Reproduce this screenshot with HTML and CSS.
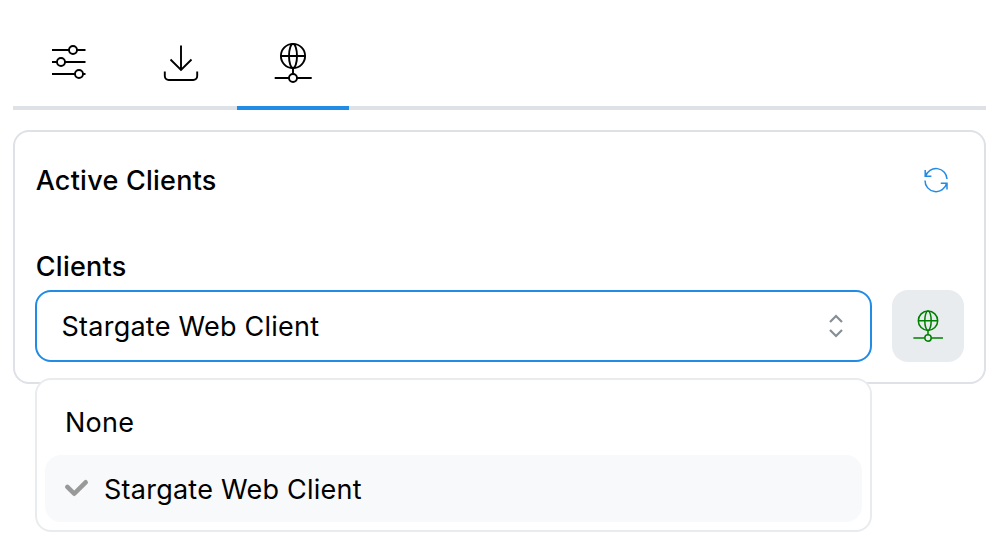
FILE: index.html
```
<!DOCTYPE html>
<html lang="en">
<head>
<meta charset="utf-8">
<title>Active Clients</title>
<link rel="stylesheet" href="styles.css">
</head>
<body>
<nav class="tabs">
  <button class="tab" aria-label="Settings">
    <svg class="tab-icon" viewBox="0 0 40 40"><path d="M3 8H20M28 8h8.500M3 20H8M16 20h20.500M3 32H26M34 32h2.500"/><circle cx="24" cy="8" r="4"/><circle cx="12" cy="20" r="4"/><circle cx="30" cy="32" r="4"/></svg>
  </button>
  <button class="tab" aria-label="Downloads">
    <svg class="tab-icon" viewBox="0 0 40 40"><path d="M20 3.500V28M9.500 17.500L20 28l10.500-10.500M3.800 29.500V34a4 4 0 0 0 4 4h24.400a4 4 0 0 0 4-4v-4.500"/></svg>
  </button>
  <button class="tab active" aria-label="Clients">
    <svg class="tab-icon" viewBox="0 0 40 40"><circle cx="20" cy="14" r="12.100"/><ellipse cx="20" cy="14" rx="4" ry="12.100"/><path d="M8 14h24M20 26v6M1.700 36H16M24 36h14.700"/><circle cx="20" cy="36" r="4"/></svg>
  </button>
</nav>
<main class="card">
  <header class="card-head">
    <h1 class="title">Active Clients</h1>
    <svg class="refresh" viewBox="0 0 28 28"><path d="M3.200 4v6.300h6.200M3.500 10.300A11 11 0 0 1 25 13M25 23.500v-6.300h-6.200M3 14.500a11 11 0 0 0 21.700 2.700"/></svg>
  </header>
  <label class="label">Clients</label>
  <div class="row">
    <div class="select">
      <span class="value">Stargate Web Client</span>
      <svg class="chevrons" viewBox="0 0 20 28"><path d="M4 10l6-6 6 6M4 18l6 6 6-6"/></svg>
      <div class="dropdown">
        <div class="option"><span class="value">None</span></div>
        <div class="option selected">
          <svg class="check" viewBox="0 0 10 7"><path d="M4 4.586L1.707 2.293A1 1 0 1 0 .293 3.707l3 3a.997.997 0 0 0 1.414 0l5-5A1 1 0 1 0 8.293.293L4 4.586z"/></svg>
          <span class="value">Stargate Web Client</span>
        </div>
      </div>
    </div>
    <button class="connect" aria-label="Connect">
      <svg class="connect-icon" viewBox="0 0 40 40"><circle cx="20" cy="13.400" r="12.100"/><ellipse cx="20" cy="13.400" rx="4" ry="12.100"/><path d="M8 13.400h24M20 25.500v5.500M1.700 35H16M24 35h14.700"/><circle cx="20" cy="35" r="4"/></svg>
    </button>
  </div>
</main>
</body>
</html>
```
FILE: styles.css
```
* {
  box-sizing: border-box;
}

body {
  margin: 0;
  padding: 18px 12px 0 13px;
  height: 546px;
  overflow: hidden;
  background: #fff;
  color: #000;
  font: 400 27px/36px Inter, "Liberation Sans", sans-serif;
  letter-spacing: 0.24px;
}

button {
  border: 0;
  padding: 0;
  background: none;
}

svg {
  display: block;
  flex: none;
  fill: none;
  overflow: visible;
}

.tabs {
  display: flex;
  height: 92px;
  box-shadow: inset 0 -4px #dee2e6;
}

.tab {
  display: flex;
  justify-content: center;
  width: 112px;
  padding-top: 24px;
  border-bottom: 4px solid transparent;
}

.tab.active {
  border-bottom-color: #228be6;
}

.tab-icon {
  width: 40px;
  height: 40px;
  stroke: #000;
  stroke-width: 1.9;
}

.card {
  height: 254px;
  margin-top: 20px;
  padding: 30px 20px 0;
  border: 2px solid #dee2e6;
  border-radius: 16px;
}

.card-head {
  display: flex;
  justify-content: space-between;
  align-items: center;
  height: 36px;
  padding-right: 14px;
}

.title {
  margin: 0;
  padding: 2px 0 0 0.7px;
  font-size: 27px;
  font-weight: 500;
}

.refresh {
  width: 28px;
  height: 28px;
  stroke: #228be6;
  stroke-width: 1.5;
}

.label {
  display: block;
  margin-top: 51px;
  padding-left: 0.8px;
  font-weight: 500;
}

.row {
  display: flex;
  gap: 20px;
  margin-top: 5px;
}

.select {
  position: relative;
  display: flex;
  flex: 1;
  align-items: center;
  justify-content: space-between;
  height: 72px;
  padding: 0 24px 0 24.5px;
  border: 2px solid #228be6;
  border-radius: 16px;
}

.value {
  padding-top: 2px;
}

.chevrons {
  width: 20px;
  height: 28px;
  stroke: #868e96;
  stroke-width: 2.2;
}

.dropdown {
  position: absolute;
  top: 86px;
  left: -2px;
  right: -2px;
  height: 154px;
  padding: 8px;
  border: 2px solid #e9ecef;
  border-radius: 16px;
  background: #fff;
}

.option {
  display: flex;
  align-items: center;
  gap: 16px;
  height: 67px;
  padding-left: 20px;
  border-radius: 16px;
}

.option.selected {
  background: #f8f9fa;
}

.check {
  width: 23px;
  height: 16px;
  margin-bottom: 1px;
  fill: #999;
}

.connect {
  display: flex;
  align-items: center;
  justify-content: center;
  width: 72px;
  height: 72px;
  border-radius: 16px;
  background: #e9ecef;
}

.connect-icon {
  width: 32px;
  height: 32px;
  stroke: #008000;
  stroke-width: 1.9;
}
```
